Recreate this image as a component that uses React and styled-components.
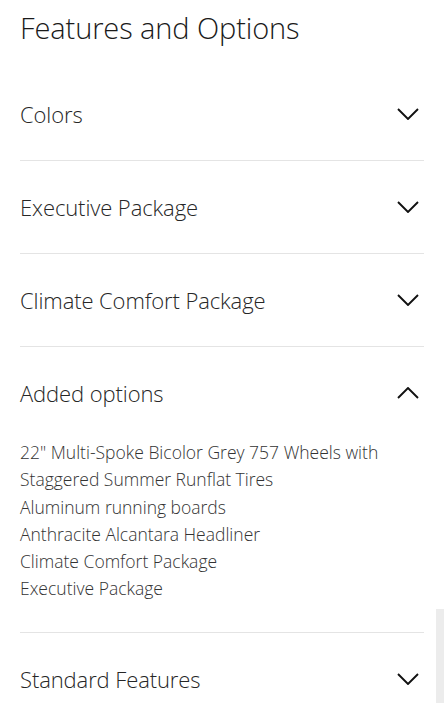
import React from "react";
import styled, { createGlobalStyle } from "styled-components";

const Global = createGlobalStyle`
  html, body { margin: 0; padding: 0; background: #fff; }
  body { font-family: "Open Sans", "Liberation Sans", sans-serif; -webkit-font-smoothing: antialiased; }
`;

const Page = styled.div`
  padding: 0 21px 0 20px;
  overflow: hidden;
  height: 720px;
  box-sizing: border-box;
`;

const Title = styled.h1`
  margin: 0;
  height: 68px;
  padding-top: 8px;
  box-sizing: border-box;
  font-size: 29px;
  font-weight: 300;
  line-height: 40px;
  color: #1a1a1a;
  letter-spacing: -0.1px;
`;

const Section = styled.section`
  border-bottom: ${(p) => (p.$last ? "none" : "1px solid #e4e4e4")};
`;

const Header = styled.div`
  height: 92px;
  display: flex;
  align-items: center;
  justify-content: space-between;
`;

const HeaderText = styled.span`
  font-size: 22px;
  font-weight: 300;
  color: #262626;
  letter-spacing: -0.1px;
`;

const Chevron = styled.svg`
  width: 22px;
  height: 12px;
  margin-right: 5px;
  flex: none;
`;

const List = styled.div`
  padding-bottom: 29px;
`;

const ItemWrap = styled.div`
  max-width: 380px;
`;

const Item = styled.div`
  font-size: 17.5px;
  font-weight: 300;
  line-height: 27.3px;
  color: #333;
`;

const Scrollbar = styled.div`
  position: absolute;
  right: 1px;
  top: 609px;
  width: 8px;
  height: 94px;
  background: #ececec;
`;

const Arrow = ({ up }) => (
  <Chevron viewBox="0 0 22 12">
    <path
      d={up ? "M1 11 L11 1 L21 11" : "M1 1 L11 11 L21 1"}
      fill="none"
      stroke="#111"
      strokeWidth="1.9"
    />
  </Chevron>
);

const sections = [
  { title: "Colors" },
  { title: "Executive Package" },
  { title: "Climate Comfort Package" },
  {
    title: "Added options",
    open: true,
    items: [
      "22\" Multi-Spoke Bicolor Grey 757 Wheels with Staggered Summer Runflat Tires",
      "Aluminum running boards",
      "Anthracite Alcantara Headliner",
      "Climate Comfort Package",
      "Executive Package",
    ],
  },
  { title: "Standard Features", last: true },
];

export default function App() {
  return (
    <>
      <Global />
      <Page>
        <Title>Features and Options</Title>
        {sections.map((s) => (
          <Section key={s.title} $last={s.last}>
            <Header>
              <HeaderText>{s.title}</HeaderText>
              <Arrow up={s.open} />
            </Header>
            {s.open && (
              <List>
                <ItemWrap>
                  {s.items.map((it) => (
                    <Item key={it}>{it}</Item>
                  ))}
                </ItemWrap>
              </List>
            )}
          </Section>
        ))}
      </Page>
      <Scrollbar />
    </>
  );
}
